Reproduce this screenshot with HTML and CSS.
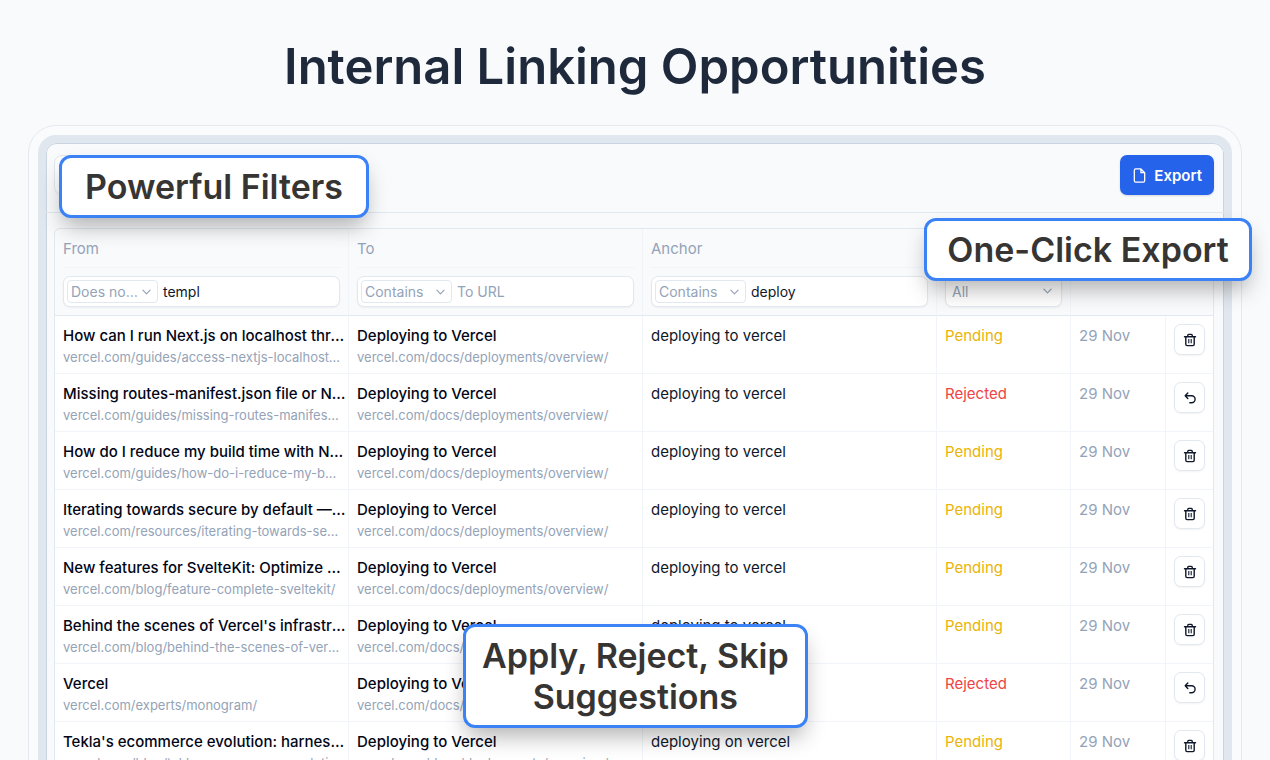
FILE: index.html
```html
<!DOCTYPE html>
<html lang="en">
<head>
    <meta charset="UTF-8">
    <meta name="viewport" content="width=device-width, initial-scale=1.0">
    <title>Internal Linking Opportunities</title>
    <link rel="stylesheet" href="styles.css">
</head>
<body>
    <svg class="sprite" aria-hidden="true">
        <symbol id="chevron" viewBox="0 0 10 6">
            <path d="M1 1l4 4 4-4" fill="none" stroke="currentColor" stroke-width="1.3" stroke-linecap="round" stroke-linejoin="round"/>
        </symbol>
        <symbol id="file" viewBox="0 0 16 18">
            <path d="M4 2h5.500l4 4v8.500a1.500 1.500 0 0 1-1.500 1.500H4a1.500 1.500 0 0 1-1.500-1.500v-11A1.500 1.500 0 0 1 4 2zM9.500 2v4h4" fill="none" stroke="currentColor" stroke-width="1.400" stroke-linejoin="round"/>
        </symbol>
        <symbol id="trash" viewBox="0 0 14 14">
            <path d="M1.500 3.700h11M4.800 3.500V2.200c0-.5.3-.8.8-.8h2.800c.5 0 .8.3.8.8v1.300M2.800 3.900v7.400c0 .8.5 1.300 1.300 1.300h5.800c.8 0 1.300-.5 1.300-1.300V3.900" fill="none" stroke="currentColor" stroke-width="1.400" stroke-linecap="round" stroke-linejoin="round"/>
            <path d="M5.800 6v4.200M8.200 6v4.200" fill="none" stroke="currentColor" stroke-width="1.100"/>
        </symbol>
        <symbol id="undo" viewBox="0 0 14 14">
            <path d="M4.800 2L2.200 4.700l2.600 2.700M2.400 4.700h6.200a3.400 3.400 0 0 1 0 7H6.800" fill="none" stroke="currentColor" stroke-width="1.400" stroke-linecap="round" stroke-linejoin="round"/>
        </symbol>
    </svg>

    <h1>Internal Linking Opportunities</h1>

    <div class="frame">
        <div class="panel">
            <div class="toolbar">
                <input class="search" type="search" aria-label="Search">
                <button class="export" type="button">
                    <svg class="file-icon" aria-hidden="true"><use href="#file"/></svg>
                    Export
                </button>
                <div class="callout callout-filters">Powerful Filters</div>
            </div>

            <div class="table-wrap">
                <div class="callout callout-export">One-Click Export</div>
                <table>
                    <colgroup>
                        <col><col><col>
                        <col class="col-status">
                        <col class="col-date">
                        <col class="col-action">
                    </colgroup>
                    <thead>
                        <tr>
                            <th>
                                <div class="heading">From</div>
                                <div class="filter">
                                    <span class="select">
                                        <select aria-label="From condition"><option>Does not contain</option><option>Contains</option></select>
                                        <svg class="chevron" aria-hidden="true"><use href="#chevron"/></svg>
                                    </span>
                                    <input type="text" aria-label="From URL" value="templ">
                                </div>
                            </th>
                            <th>
                                <div class="heading">To</div>
                                <div class="filter">
                                    <span class="select">
                                        <select aria-label="To condition"><option>Contains</option><option>Does not contain</option></select>
                                        <svg class="chevron" aria-hidden="true"><use href="#chevron"/></svg>
                                    </span>
                                    <input type="text" aria-label="To URL" placeholder="To URL">
                                </div>
                            </th>
                            <th>
                                <div class="heading">Anchor</div>
                                <div class="filter">
                                    <span class="select">
                                        <select aria-label="Anchor condition"><option>Contains</option><option>Does not contain</option></select>
                                        <svg class="chevron" aria-hidden="true"><use href="#chevron"/></svg>
                                    </span>
                                    <input type="text" aria-label="Anchor" value="deploy">
                                </div>
                            </th>
                            <th>
                                <div class="heading"></div>
                                <div class="filter">
                                    <span class="select select-full">
                                        <select aria-label="Status"><option>All</option><option>Pending</option><option>Rejected</option></select>
                                        <svg class="chevron" aria-hidden="true"><use href="#chevron"/></svg>
                                    </span>
                                </div>
                            </th>
                            <th colspan="2" aria-label="Date"></th>
                        </tr>
                    </thead>
                    <tbody>
                        <tr>
                            <td><div class="title">How can I run Next.js on localhost through HTTPS?</div><div class="url">vercel.com/guides/access-nextjs-localhost-https-certificate</div></td>
                            <td><div class="title">Deploying to Vercel</div><div class="url">vercel.com/docs/deployments/overview/</div></td>
                            <td>deploying to vercel</td>
                            <td class="pending">Pending</td>
                            <td class="date">29 Nov</td>
                            <td><button class="action" type="button" aria-label="Reject"><svg aria-hidden="true"><use href="#trash"/></svg></button></td>
                        </tr>
                        <tr>
                            <td><div class="title">Missing routes-manifest.json file or Next.js output</div><div class="url">vercel.com/guides/missing-routes-manifest-or-output</div></td>
                            <td><div class="title">Deploying to Vercel</div><div class="url">vercel.com/docs/deployments/overview/</div></td>
                            <td>deploying to vercel</td>
                            <td class="rejected">Rejected</td>
                            <td class="date">29 Nov</td>
                            <td><button class="action" type="button" aria-label="Restore"><svg aria-hidden="true"><use href="#undo"/></svg></button></td>
                        </tr>
                        <tr>
                            <td><div class="title">How do I reduce my build time with Next.js on Vercel?</div><div class="url">vercel.com/guides/how-do-i-reduce-my-build-time</div></td>
                            <td><div class="title">Deploying to Vercel</div><div class="url">vercel.com/docs/deployments/overview/</div></td>
                            <td>deploying to vercel</td>
                            <td class="pending">Pending</td>
                            <td class="date">29 Nov</td>
                            <td><button class="action" type="button" aria-label="Reject"><svg aria-hidden="true"><use href="#trash"/></svg></button></td>
                        </tr>
                        <tr>
                            <td><div class="title">Iterating towards secure by default — Vercel</div><div class="url">vercel.com/resources/iterating-towards-secure-by-default</div></td>
                            <td><div class="title">Deploying to Vercel</div><div class="url">vercel.com/docs/deployments/overview/</div></td>
                            <td>deploying to vercel</td>
                            <td class="pending">Pending</td>
                            <td class="date">29 Nov</td>
                            <td><button class="action" type="button" aria-label="Reject"><svg aria-hidden="true"><use href="#trash"/></svg></button></td>
                        </tr>
                        <tr>
                            <td><div class="title">New features for SvelteKit: Optimize your app</div><div class="url">vercel.com/blog/feature-complete-sveltekit/</div></td>
                            <td><div class="title">Deploying to Vercel</div><div class="url">vercel.com/docs/deployments/overview/</div></td>
                            <td>deploying to vercel</td>
                            <td class="pending">Pending</td>
                            <td class="date">29 Nov</td>
                            <td><button class="action" type="button" aria-label="Reject"><svg aria-hidden="true"><use href="#trash"/></svg></button></td>
                        </tr>
                        <tr>
                            <td><div class="title">Behind the scenes of Vercel's infrastructure</div><div class="url">vercel.com/blog/behind-the-scenes-of-vercels-infrastructure</div></td>
                            <td><div class="title">Deploying to Vercel</div><div class="url">vercel.com/docs/deployments/overview/</div></td>
                            <td>deploying to vercel</td>
                            <td class="pending">Pending</td>
                            <td class="date">29 Nov</td>
                            <td><button class="action" type="button" aria-label="Reject"><svg aria-hidden="true"><use href="#trash"/></svg></button></td>
                        </tr>
                        <tr>
                            <td><div class="title">Vercel</div><div class="url">vercel.com/experts/monogram/</div></td>
                            <td><div class="title">Deploying to Vercel</div><div class="url">vercel.com/docs/deployments/overview/</div></td>
                            <td>deploying to vercel</td>
                            <td class="rejected">Rejected</td>
                            <td class="date">29 Nov</td>
                            <td><button class="action" type="button" aria-label="Restore"><svg aria-hidden="true"><use href="#undo"/></svg></button></td>
                        </tr>
                        <tr>
                            <td><div class="title">Tekla's ecommerce evolution: harnessing Vercel</div><div class="url">vercel.com/blog/teklas-ecommerce-evolution</div></td>
                            <td><div class="title">Deploying to Vercel</div><div class="url">vercel.com/docs/deployments/overview/</div></td>
                            <td>deploying on vercel</td>
                            <td class="pending">Pending</td>
                            <td class="date">29 Nov</td>
                            <td><button class="action" type="button" aria-label="Reject"><svg aria-hidden="true"><use href="#trash"/></svg></button></td>
                        </tr>
                    </tbody>
                </table>
                <div class="callout callout-actions">Apply, Reject, Skip<br>Suggestions</div>
            </div>
        </div>
    </div>
</body>
</html>
```
FILE: styles.css
```css
* { box-sizing: border-box; }
body {
    margin: 0;
    height: 100vh;
    overflow: hidden;
    background: #f9fafc;
    font-family: Inter, "Liberation Sans", sans-serif;
    font-size: 15px;
    color: #0f172a;
}
.sprite { display: none; }
h1 {
    margin: 0;
    padding: 37px 0 28px;
    font-size: 49px;
    font-weight: 600;
    line-height: 60px;
    text-align: center;
    color: #1e293b;
}
.frame {
    margin: 0 28px;
    padding: 9px;
    border: 1px solid #e5e9f0;
    border-radius: 28px;
    background: #fafbfd;
}
.panel {
    border: 8px solid #e1e7ef;
    border-radius: 18px;
    background: #f9fafc;
    box-shadow: inset 0 0 0 1px #cbd5e1;
}
.toolbar {
    position: relative;
    display: flex;
    justify-content: space-between;
    align-items: flex-start;
    height: 70px;
    padding: 12px 10px 0 8px;
    border-bottom: 1px solid #e2e8f0;
}
.search {
    width: 200px;
    height: 40px;
    border: 1px solid #e2e8f0;
    border-radius: 8px;
    background: white;
}
.export {
    display: flex;
    align-items: center;
    gap: 7px;
    height: 40px;
    padding: 0 12px;
    border: none;
    border-radius: 7px;
    background: #2563eb;
    color: white;
    font: 600 15px Inter, sans-serif;
    box-shadow: 0 1px 2px rgba(15, 23, 42, 0.15);
}
.file-icon { width: 15px; height: 17px; }

.table-wrap {
    position: relative;
    padding: 15px 10px 0 8px;
}
table {
    width: 100%;
    table-layout: fixed;
    border-collapse: separate;
    border-spacing: 0;
    border: 1px solid #e2e8f0;
    border-radius: 6px 6px 0 0;
}
.col-status { width: 134px; }
.col-date { width: 95px; }
.col-action { width: 47px; }
th {
    height: 87px;
    padding: 0 8px;
    border-right: 1px solid #f1f5f9;
    border-bottom: 1px solid #e2e8f0;
    vertical-align: top;
    text-align: left;
    font-weight: 400;
    color: #94a3b8;
}
.heading {
    height: 39px;
    line-height: 39px;
    border-bottom: 1px solid #f1f5f9;
}
.filter {
    display: flex;
    align-items: center;
    height: 31px;
    margin-top: 8px;
    padding: 0 3px;
    border: 1px solid #e2e8f0;
    border-radius: 7px;
    background: white;
    box-shadow: 0 1px 2px rgba(15, 23, 42, 0.05);
}
.select {
    position: relative;
    flex: none;
    width: 91px;
    height: 23px;
    border: 1px solid #e2e8f0;
    border-radius: 4px;
}
.select select {
    width: 100%;
    height: 100%;
    padding: 0 16px 0 3px;
    border: none;
    background: none;
    appearance: none;
    font: 14px Inter, sans-serif;
    color: #94a3b8;
    text-overflow: ellipsis;
}
.chevron {
    position: absolute;
    top: 8px;
    right: 6px;
    width: 9px;
    height: 6px;
    color: #94a3b8;
    pointer-events: none;
}
.select-full {
    width: 100%;
    border: none;
}
.filter input {
    flex: 1;
    min-width: 0;
    height: 23px;
    padding: 0 5px;
    border: none;
    outline: none;
    background: none;
    font: 14px Inter, sans-serif;
    color: #0f172a;
}
.filter input::placeholder { color: #94a3b8; }
td {
    height: 58px;
    padding: 9px 8px 0;
    border-right: 1px solid #f1f5f9;
    border-bottom: 1px solid #f1f5f9;
    background: white;
    vertical-align: top;
    line-height: 22px;
}
td:last-child { padding-top: 8px; }
th:last-child, td:last-child { border-right: none; }
.title, .url {
    overflow: hidden;
    white-space: nowrap;
    text-overflow: ellipsis;
}
.title {
    margin-right: -6px;
    font-weight: 500;
    color: #020617;
}
.url {
    margin-right: -2px;
    font-size: 13px;
    line-height: 20px;
    color: #94a3b8;
}
.pending { color: #eab308; }
.rejected { color: #ef4444; }
.date { color: #94a3b8; }
.action {
    display: flex;
    align-items: center;
    justify-content: center;
    width: 31px;
    height: 31px;
    padding: 0;
    border: 1px solid #e2e8f0;
    border-radius: 7px;
    background: white;
    color: #0f172a;
    box-shadow: 0 1px 2px rgba(15, 23, 42, 0.05);
}
.action svg { width: 14px; height: 14px; }

/* marketing labels floating over the table */
.callout {
    position: absolute;
    z-index: 1;
    padding: 8px 16px;
    border: 3px solid #3b82f6;
    border-radius: 12px;
    background: white;
    color: #373533;
    font-size: 34px;
    font-weight: 600;
    line-height: 41px;
    text-align: center;
    white-space: nowrap;
    box-shadow: 0 12px 22px -4px rgba(0, 0, 0, 0.3);
}
.callout-filters {
    top: 12px;
    left: 13px;
    min-width: 310px;
}
.callout-export {
    top: 5px;
    right: -28px;
    min-width: 328px;
}
.callout-actions {
    top: 411px;
    left: 417px;
    min-width: 344px;
}
```
